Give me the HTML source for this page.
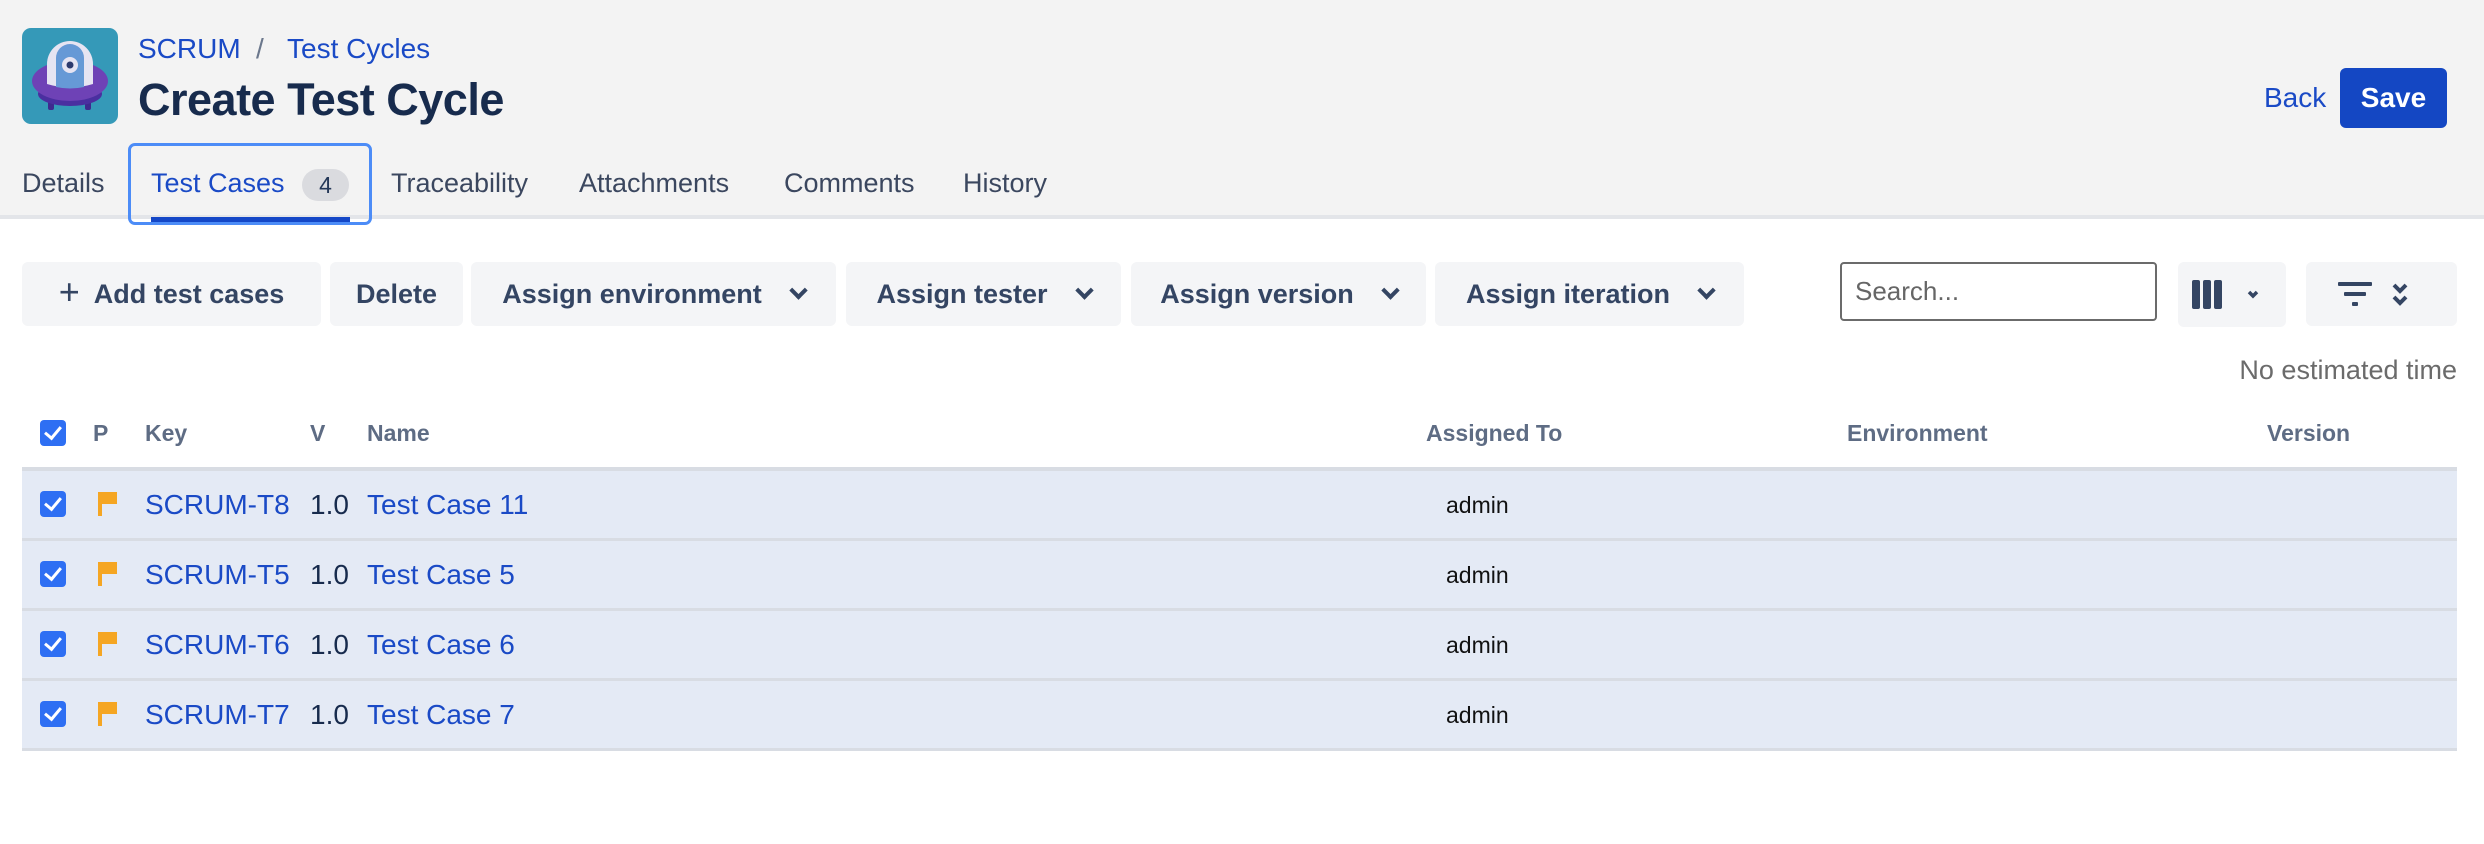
<!DOCTYPE html>
<html><head><meta charset="utf-8"><style>
*{box-sizing:border-box;margin:0;padding:0}
body{width:2484px;height:844px;background:#fff;font-family:"Liberation Sans",sans-serif;position:relative;overflow:hidden;color:#172b4d}
.abs{position:absolute;white-space:nowrap}
.hdr{position:absolute;left:0;top:0;width:2484px;height:219px;background:#f3f3f3;border-bottom:4px solid #e3e5e9}
.bc{font-size:28px;color:#1a4ac6;top:33px}
.title{left:138px;top:74px;font-size:45px;font-weight:bold;color:#172b4d;letter-spacing:-0.5px}
.tab{top:168px;font-size:27px;color:#3b475f}
.btn{position:absolute;top:262px;height:64px;background:#f4f5f7;border-radius:6px;font-size:27px;color:#344563;font-weight:bold;display:flex;align-items:center;justify-content:center;gap:14px}
.chev{width:13px;height:13px;border-right:4px solid #344563;border-bottom:4px solid #344563;transform:rotate(45deg);margin-top:-8px;margin-left:16px}
.th{top:420px;font-size:23px;font-weight:bold;color:#5e6c84}
.row{position:absolute;left:22px;width:2435px;height:70px;background:#e4eaf5;border-bottom:3px solid #d8dce3}
.cb{position:absolute;left:18px;width:26px;height:26px;background:#2e6ff3;border-radius:4px}
.cb::after{content:"";position:absolute;left:8px;top:3px;width:7px;height:13px;border-right:3.5px solid #fff;border-bottom:3.5px solid #fff;transform:rotate(40deg)}
.key{position:absolute;left:123px;font-size:28px;color:#1a4ac6}
.ver{position:absolute;left:288px;font-size:28px;color:#172b4d}
.nm{position:absolute;left:345px;font-size:28px;color:#1a4ac6}
.adm{position:absolute;left:1424px;font-size:23px;color:#111}
</style></head><body>
<div class="hdr"></div>
<svg class="abs" style="left:22px;top:28px" width="96" height="96" viewBox="0 0 96 96">
<rect width="96" height="96" rx="9" fill="#3599b8"/>
<rect x="26" y="60" width="6" height="22" rx="2" fill="#3e2a8f"/>
<rect x="63" y="60" width="6" height="22" rx="2" fill="#3e2a8f"/>
<ellipse cx="48" cy="66" rx="32" ry="12" fill="#4a2fa0"/>
<ellipse cx="48" cy="53" rx="38" ry="20" fill="#6e42b6"/>
<path d="M25 36 A23 23 0 0 1 71 36 L71 56 Q48 63 25 56 Z" fill="#e6e4f2"/>
<path d="M34 59 L34 30 A14 14 0 0 1 62 30 L62 59 Q48 62 34 59Z" fill="#6699d6"/>
<circle cx="48" cy="37" r="8" fill="#e6e4f2"/>
<circle cx="48" cy="37" r="3.5" fill="#2d3a6e"/>
</svg>
<div class="abs bc" style="left:138px">SCRUM</div>
<div class="abs bc" style="left:256px;color:#6b778c">/</div>
<div class="abs bc" style="left:287px">Test Cycles</div>
<div class="abs title">Create Test Cycle</div>
<div class="abs" style="left:2264px;top:82px;font-size:28px;color:#1a4ac6">Back</div>
<div class="abs" style="left:2340px;top:68px;width:107px;height:60px;background:#1447c3;border-radius:6px;color:#fff;font-size:28px;font-weight:bold;display:flex;align-items:center;justify-content:center">Save</div>

<div class="abs tab" style="left:22px">Details</div>
<div class="abs" style="left:128px;top:143px;width:244px;height:82px;border:3px solid #4c8cf7;border-radius:7px"></div>
<div class="abs tab" style="left:151px;color:#1a4ac6">Test Cases</div>
<div class="abs" style="left:302px;top:169px;width:47px;height:32px;background:#dadbdf;border-radius:16px;font-size:23px;color:#253858;text-align:center;line-height:32px">4</div>
<div class="abs" style="left:151px;top:217px;width:199px;height:5px;background:#1447c7"></div>
<div class="abs tab" style="left:391px">Traceability</div>
<div class="abs tab" style="left:579px">Attachments</div>
<div class="abs tab" style="left:784px">Comments</div>
<div class="abs tab" style="left:963px">History</div>

<div class="btn" style="left:22px;width:299px"><span style="font-size:36px;font-weight:normal;margin-top:-4px">+</span>Add test cases</div>
<div class="btn" style="left:330px;width:133px">Delete</div>
<div class="btn" style="left:471px;width:365px">Assign environment<span class="chev"></span></div>
<div class="btn" style="left:846px;width:275px">Assign tester<span class="chev"></span></div>
<div class="btn" style="left:1131px;width:295px">Assign version<span class="chev"></span></div>
<div class="btn" style="left:1435px;width:309px">Assign iteration<span class="chev"></span></div>
<div class="abs" style="left:1840px;top:262px;width:317px;height:59px;border:2px solid #6b6b6b;border-radius:4px;background:#fff;font-size:26px;color:#666;padding:12px 0 0 13px">Search...</div>
<div class="abs" style="left:2178px;top:262px;width:108px;height:65px;background:#f4f5f7;border-radius:6px">
<svg class="abs" style="left:13px;top:17px" width="80" height="32" viewBox="0 0 80 32"><rect x="1" y="1" width="8" height="29" rx="2" fill="#344563"/><rect x="12" y="1" width="8" height="29" rx="2" fill="#344563"/><rect x="23" y="1" width="8" height="29" rx="2" fill="#344563"/><path d="M58 13 L62 17 L66 13" stroke="#344563" stroke-width="3.5" fill="none"/></svg></div>
<div class="abs" style="left:2306px;top:262px;width:151px;height:64px;background:#f4f5f7;border-radius:6px">
<svg class="abs" style="left:30px;top:18px" width="90" height="30" viewBox="0 0 90 30"><rect x="2" y="2" width="34" height="4" rx="1" fill="#344563"/><rect x="8" y="12" width="22" height="4" rx="1" fill="#344563"/><rect x="16" y="22" width="6" height="4" rx="1" fill="#344563"/><path d="M58 5 L64 11 L70 5 M58 17 L64 23 L70 17" stroke="#344563" stroke-width="4" fill="none"/></svg></div>
<div class="abs" style="right:27px;top:355px;font-size:27px;color:#6b6b6b">No estimated time</div>

<div class="cb" style="top:420px;left:40px"></div>
<div class="abs th" style="left:93px">P</div>
<div class="abs th" style="left:145px">Key</div>
<div class="abs th" style="left:310px">V</div>
<div class="abs th" style="left:367px">Name</div>
<div class="abs th" style="left:1426px">Assigned To</div>
<div class="abs th" style="left:1847px">Environment</div>
<div class="abs th" style="left:2267px">Version</div>
<div class="abs" style="left:22px;top:467px;width:2435px;height:4px;background:#d8dce3"></div>

<div class="row" style="top:471px"><div class="cb" style="top:20px"></div><svg class="abs" style="left:75px;top:19px" width="22" height="26"><path d="M2 2 H20 V14 H5 V26 H1 V2Z" fill="#f5a623"/></svg><div class="key" style="top:18px">SCRUM-T8</div><div class="ver" style="top:18px">1.0</div><div class="nm" style="top:18px">Test Case 11</div><div class="adm" style="top:21px">admin</div></div>
<div class="row" style="top:541px"><div class="cb" style="top:20px"></div><svg class="abs" style="left:75px;top:19px" width="22" height="26"><path d="M2 2 H20 V14 H5 V26 H1 V2Z" fill="#f5a623"/></svg><div class="key" style="top:18px">SCRUM-T5</div><div class="ver" style="top:18px">1.0</div><div class="nm" style="top:18px">Test Case 5</div><div class="adm" style="top:21px">admin</div></div>
<div class="row" style="top:611px"><div class="cb" style="top:20px"></div><svg class="abs" style="left:75px;top:19px" width="22" height="26"><path d="M2 2 H20 V14 H5 V26 H1 V2Z" fill="#f5a623"/></svg><div class="key" style="top:18px">SCRUM-T6</div><div class="ver" style="top:18px">1.0</div><div class="nm" style="top:18px">Test Case 6</div><div class="adm" style="top:21px">admin</div></div>
<div class="row" style="top:681px"><div class="cb" style="top:20px"></div><svg class="abs" style="left:75px;top:19px" width="22" height="26"><path d="M2 2 H20 V14 H5 V26 H1 V2Z" fill="#f5a623"/></svg><div class="key" style="top:18px">SCRUM-T7</div><div class="ver" style="top:18px">1.0</div><div class="nm" style="top:18px">Test Case 7</div><div class="adm" style="top:21px">admin</div></div>
</body></html>
